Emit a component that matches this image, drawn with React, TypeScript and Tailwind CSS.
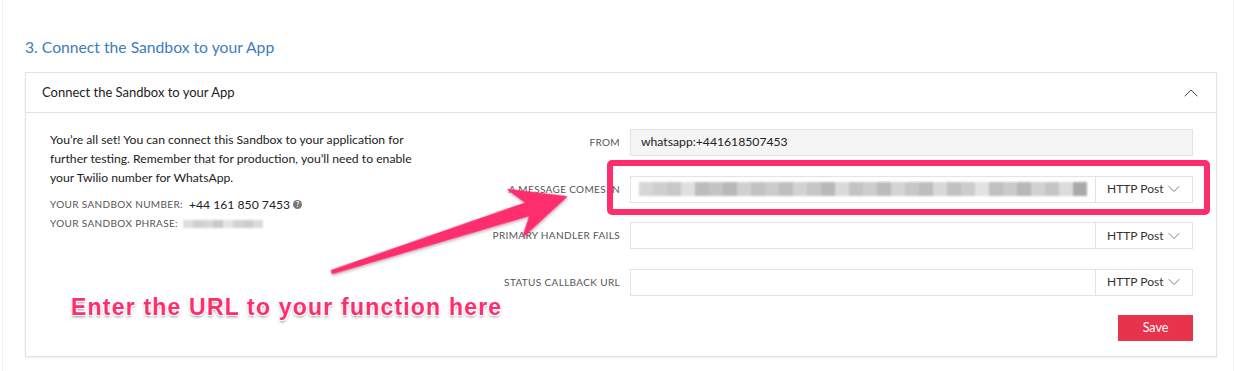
import { ChevronDown, ChevronUp } from "lucide-react";

const font = "font-['Lato','Open_Sans',sans-serif]";

function Blurred({ blocks, className }: { blocks: string[]; className?: string }) {
  return (
    <div className={"flex items-stretch blur-[1.2px] " + (className ?? "")}>
      {blocks.map((c, i) => (
        <span key={i} className="flex-1" style={{ backgroundColor: c }} />
      ))}
    </div>
  );
}

const urlBlocks = [
  "#d6d6d6", "#cfcfcf", "#c8c8c8", "#e0e0e0", "#bcbcbc", "#c4c4c4", "#b8b8b8", "#d0d0d0",
  "#c2c2c2", "#cbcbcb", "#bfbfbf", "#d2d2d2", "#c6c6c6", "#b9b9b9", "#dadada", "#c3c3c3",
  "#cdcdcd", "#bbbbbb", "#d4d4d4", "#c7c7c7", "#bdbdbd", "#d8d8d8", "#c1c1c1", "#cccccc",
  "#e2e2e2", "#c0c0c0", "#cacaca", "#b7b7b7", "#d1d1d1", "#c5c5c5", "#dcdcdc", "#a9a9a9",
];

const phraseBlocks = ["#dedede", "#cfcfcf", "#d6d6d6", "#c9c9c9", "#e4e4e4", "#d2d2d2", "#cdcdcd", "#dadada"];

function MethodSelect() {
  return (
    <div className="flex h-full w-[97px] items-center justify-between border-l border-[#e3e3e3] bg-white pl-[11px] pr-[8px] text-[12px] text-[#333]">
      <span>HTTP Post</span>
      <ChevronDown size={20} strokeWidth={0.9} className="text-[#555]" />
    </div>
  );
}

function Row({ label, children, gray }: { label: string; children?: React.ReactNode; gray?: boolean }) {
  return (
    <div className="flex h-[27px] items-center">
      <div className="w-[200px] pr-[10px] text-right text-[10px] tracking-[0.035em] text-[#555]">{label}</div>
      <div
        className={
          "flex h-full flex-1 items-center border border-[#e3e3e3] " + (gray ? "bg-[#f5f5f5]" : "bg-white")
        }
      >
        {children}
      </div>
    </div>
  );
}

function Arrow() {
  return (
    <svg className="pointer-events-none absolute left-0 top-0" width="1234" height="371">
      <defs>
        <filter id="sh" x="-20%" y="-20%" width="140%" height="140%">
          <feDropShadow dx="0" dy="1.5" stdDeviation="1.5" floodColor="#000" floodOpacity="0.3" />
        </filter>
      </defs>
      <g transform="translate(332 272) rotate(-17.8)" filter="url(#sh)">
        <polygon
          points="0,-1.6 206,-6.5 193,-24.5 246,0 193,24.5 206,6.5 0,1.6"
          fill="#fe2e6e"
          stroke="#fe2e6e"
          strokeWidth="1.5"
          strokeLinejoin="round"
        />
      </g>
    </svg>
  );
}

export default function App() {
  return (
    <div className={"relative h-[371px] w-[1234px] overflow-hidden bg-white " + font}>
      <div className="ml-[2px] h-full border-x border-[#f1f1f1] pl-[22px] pr-[16px] pt-[37px]">
        <h2 className="text-[15.7px] leading-[20px] text-[#3b7dbd]">3. Connect the Sandbox to your App</h2>

        <div className="mt-[15px] border border-[#e3e3e3] bg-white shadow-[0_1px_2px_rgba(0,0,0,0.06)]">
          <div className="flex h-[40px] items-center justify-between border-b border-[#e3e3e3] pl-[16px] pr-[13px]">
            <span className="text-[13px] text-[#222]">Connect the Sandbox to your App</span>
            <ChevronUp size={24} strokeWidth={0.9} className="text-[#333]" />
          </div>

          <div className="flex pb-[15px] pl-[24px] pr-[23px] pt-[16px]">
            <div className="w-[380px] pt-[1px]">
              <p className="w-[370px] text-[12.2px] leading-[19px] text-[#222]">
                You’re all set! You can connect this Sandbox to your application for further testing. Remember that for
                production, you’ll need to enable your Twilio number for WhatsApp.
              </p>
              <div className="mt-[8px] flex items-center text-[12.2px] leading-[19px]">
                <span className="mr-[6px] text-[10px] tracking-[0.035em] text-[#555]">YOUR SANDBOX NUMBER:</span>
                <span className="text-[#222]">+44 161 850 7453</span>
                <span className="ml-[3px] flex h-[9px] w-[9px] items-center justify-center rounded-full bg-[#777] text-[7px] font-bold leading-none text-white">
                  ?
                </span>
              </div>
              <div className="flex items-center leading-[19px]">
                <span className="mr-[5px] text-[10px] tracking-[0.035em] text-[#555]">YOUR SANDBOX PHRASE:</span>
                <Blurred blocks={phraseBlocks} className="h-[8px] w-[80px]" />
              </div>
            </div>

            <div className="flex flex-1 flex-col gap-[19.5px]">
              <Row label="FROM" gray>
                <span className="pl-[10px] text-[12.2px] text-[#222]">whatsapp:+441618507453</span>
              </Row>
              <Row label="A MESSAGE COMES IN">
                <div className="flex h-full flex-1 items-center pl-[8px] pr-[8px]">
                  <Blurred blocks={urlBlocks} className="h-[14px] w-full" />
                </div>
                <MethodSelect />
              </Row>
              <Row label="PRIMARY HANDLER FAILS">
                <div className="flex-1" />
                <MethodSelect />
              </Row>
              <Row label="STATUS CALLBACK URL">
                <div className="flex-1" />
                <MethodSelect />
              </Row>
              <div className="flex justify-end">
                <button className="h-[26px] w-[75px] bg-[#e8334c] text-[12.5px] text-white">Save</button>
              </div>
            </div>
          </div>
        </div>
      </div>

      {/* annotations */}
      <div className="pointer-events-none absolute left-[607px] top-[160px] h-[55px] w-[603px] rounded-[5px] border-[6px] border-[#fe2e6e]" />
      <Arrow />
      <div className="pointer-events-none absolute left-[71px] top-[293px] font-['Liberation_Sans',Arial,sans-serif] text-[23px] font-bold leading-[28px] tracking-[1.2px] text-[#fe2e6e] [text-shadow:0_0_1px_#fff,0_0_2px_#fff,1px_1px_0_#fff,-1px_-1px_0_#fff,1px_-1px_0_#fff,-1px_1px_0_#fff,0_2px_3px_rgba(0,0,0,0.45)]">
        Enter the URL to your function here
      </div>
    </div>
  );
}
